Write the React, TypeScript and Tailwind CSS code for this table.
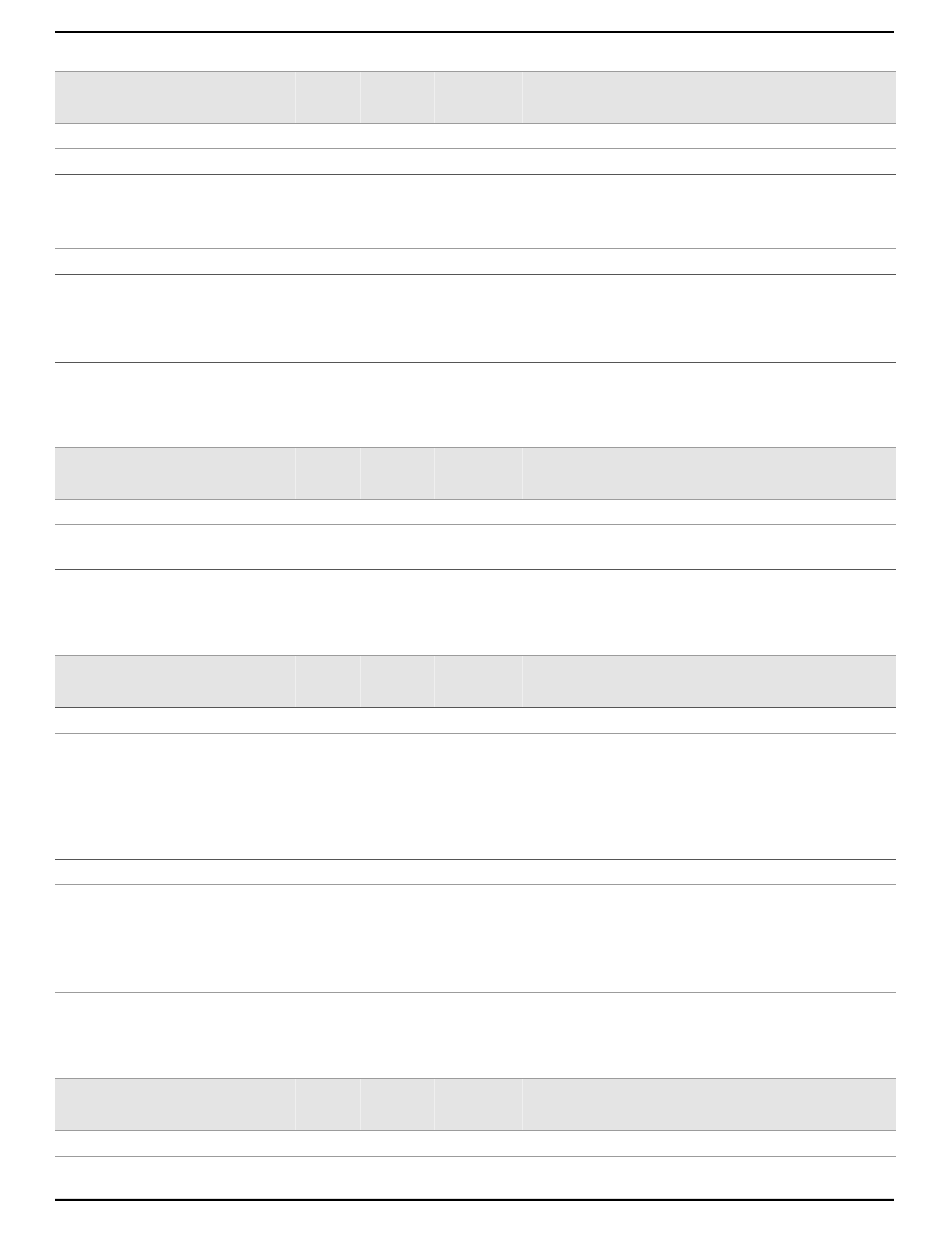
import React from 'react';

type Row = { h: string; line: 'light' | 'dark' };

type Table = {
  gap: string;
  headerLine: 'light' | 'dark';
  rows: Row[];
};

const tables: Table[] = [
  {
    gap: 'mt-[38px]',
    headerLine: 'light',
    rows: [
      { h: 'h-[25px]', line: 'light' },
      { h: 'h-[26px]', line: 'dark' },
      { h: 'h-[74px]', line: 'light' },
      { h: 'h-[26px]', line: 'dark' },
      { h: 'h-[88px]', line: 'dark' },
    ],
  },
  {
    gap: 'mt-[84px]',
    headerLine: 'light',
    rows: [
      { h: 'h-[25px]', line: 'light' },
      { h: 'h-[45px]', line: 'dark' },
    ],
  },
  {
    gap: 'mt-[85px]',
    headerLine: 'dark',
    rows: [
      { h: 'h-[26px]', line: 'light' },
      { h: 'h-[126px]', line: 'dark' },
      { h: 'h-[25px]', line: 'light' },
      { h: 'h-[108px]', line: 'light' },
    ],
  },
  {
    gap: 'mt-[85px]',
    headerLine: 'light',
    rows: [{ h: 'h-[26px]', line: 'light' }],
  },
];

const lineClass = (l: 'light' | 'dark') =>
  l === 'dark' ? 'border-[#555555]' : 'border-[#9c9c9c]';

const HeaderRow: React.FC<{ line: 'light' | 'dark' }> = ({ line }) => (
  <div
    className={`grid grid-cols-[240px_65px_74px_88px_1fr] h-[52px] bg-[#e4e4e4] border-b ${lineClass(line)}`}
  >
    <div />
    <div className="border-l border-[#efefef]" />
    <div className="border-l border-[#efefef]" />
    <div className="border-l border-[#efefef]" />
    <div className="border-l border-[#efefef]" />
  </div>
);

const DocTable: React.FC<{ table: Table }> = ({ table }) => (
  <div className={`${table.gap} w-[841px] flex flex-col border-t border-[#9c9c9c]`}>
    <HeaderRow line={table.headerLine} />
    {table.rows.map((r, i) => (
      <div key={i} className={`${r.h} border-b ${lineClass(r.line)}`} />
    ))}
  </div>
);

export default function App() {
  return (
    <div className="w-[950px] h-[1260px] bg-white pl-[55px] pt-[31px] font-['Liberation_Sans',sans-serif]">
      <div className="w-[839px] h-[2px] bg-black" />
      {tables.map((t, i) => (
        <DocTable key={i} table={t} />
      ))}
      <div className="mt-[41px] w-[839px] border-t border-[#dcdcdc] h-[3px] bg-black bg-clip-content" />
    </div>
  );
}
